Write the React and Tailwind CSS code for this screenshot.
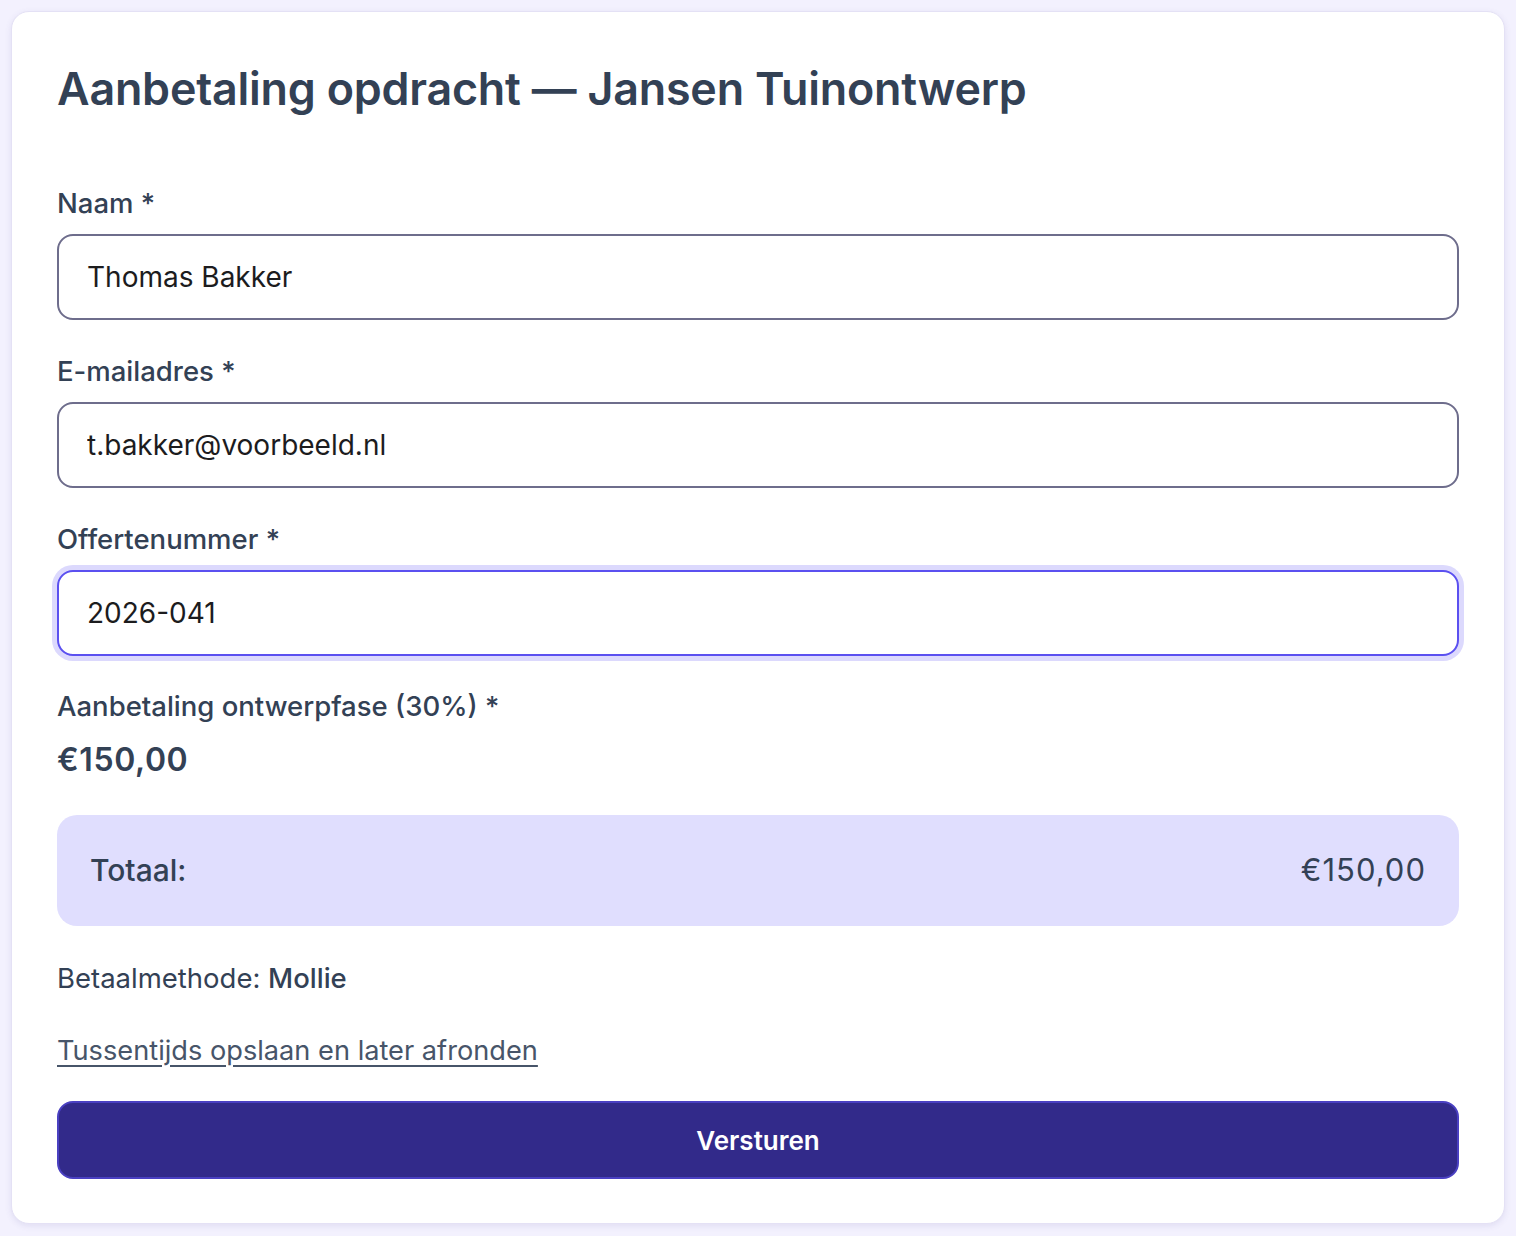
import { useState } from 'react';

function Field({ label, value, onChange, focused }) {
  return (
    <label className="block">
      <span className="block text-[27.5px] leading-[39px] font-medium text-[#334155]">{label}</span>
      <input
        value={value}
        onChange={(e) => onChange(e.target.value)}
        className={`mt-[11px] block w-full h-[86px] rounded-[16px] bg-white px-[28px] text-[28px] text-[#1c1c1e] outline-none border-2 ${
          focused ? 'border-[#5b50f0] ring-[5px] ring-[#dcd9fd]' : 'border-[#6e6d8c]'
        }`}
      />
    </label>
  );
}

export default function App() {
  const [naam, setNaam] = useState('Thomas Bakker');
  const [email, setEmail] = useState('t.bakker@voorbeeld.nl');
  const [offerte, setOfferte] = useState('2026-041');

  return (
    <div className="min-h-screen bg-[#f3f1fe] p-[11px]" style={{ fontFamily: 'Inter, "Noto Sans", sans-serif' }}>
      <div className="rounded-[18px] border border-[#e4e1f5] bg-white px-[45px] pt-[51px] pb-[44px] shadow-[0_2px_6px_rgba(90,80,160,0.12)]">
        <h1 className="text-[44.8px] leading-[53px] font-semibold text-[#334155] tracking-[-0.2px]">
          Aanbetaling opdracht — Jansen Tuinontwerp
        </h1>

        <div className="mt-[68px] flex flex-col gap-[32px]">
          <Field label="Naam *" value={naam} onChange={setNaam} />
          <Field label="E-mailadres *" value={email} onChange={setEmail} />
          <Field label="Offertenummer *" value={offerte} onChange={setOfferte} focused />
        </div>

        <div className="mt-[31px]">
          <p className="text-[27.5px] leading-[39px] font-medium text-[#334155]">Aanbetaling ontwerpfase (30%) *</p>
          <p className="mt-[14px] text-[32px] leading-[40px] font-semibold text-[#334155] tracking-[0.6px]">€150,00</p>
        </div>

        <div className="mt-[35px] flex h-[111px] items-center justify-between rounded-[20px] bg-[#e0defe] px-[33px] text-[30px] font-medium text-[#334155]">
          <span>Totaal:</span>
          <span className="font-normal text-[31px] tracking-[1px]">€150,00</span>
        </div>

        <p className="mt-[33px] text-[27.5px] leading-[39px] text-[#334155]">
          Betaalmethode: <span className="font-medium">Mollie</span>
        </p>

        <a href="#" className="mt-[33px] inline-block text-[27.2px] leading-[39px] text-[#475569] underline underline-offset-[5px] decoration-[2px]">
          Tussentijds opslaan en later afronden
        </a>

        <button className="mt-[31px] block w-full h-[78px] rounded-[16px] border-2 border-[#4a40c2] bg-[#322a8a] text-[26px] font-semibold text-white">
          Versturen
        </button>
      </div>
    </div>
  );
}
